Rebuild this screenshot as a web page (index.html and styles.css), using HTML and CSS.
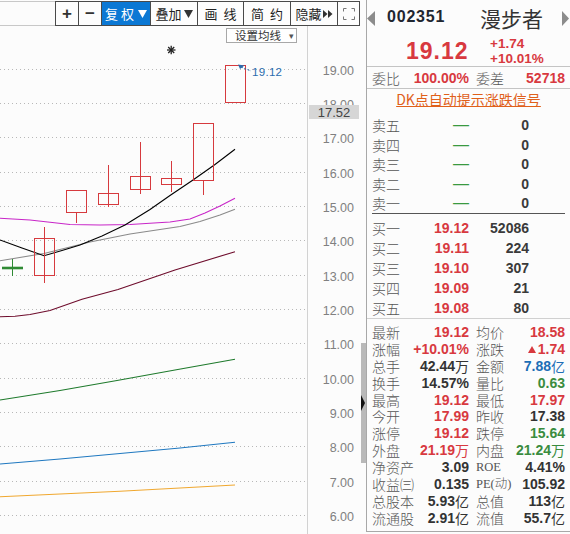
FILE: index.html
```html
<!DOCTYPE html>
<html lang="zh">
<head>
<meta charset="utf-8">
<title>002351 漫步者</title>
<link rel="stylesheet" href="styles.css">
</head>
<body>
<div class="app">
  <section class="chart-col">
    <div class="toolbar">
      <div class="tb-group">
        <span class="tb-btn b-plus">+</span>
        <span class="tb-btn b-minus">−</span>
        <span class="tb-btn b-fq active"><span class="sp3">复权</span><svg class="tri" width="9" height="8" viewBox="0 0 9 8"><polygon points="0,0 9,0 4.5,8"/></svg></span>
        <span class="tb-btn b-dj">叠加<svg class="tri" width="9" height="8" viewBox="0 0 9 8"><polygon points="0,0 9,0 4.5,8"/></svg></span>
        <span class="tb-btn b-hx"><span class="sp6">画线</span></span>
        <span class="tb-btn b-jy"><span class="sp6">简约</span></span>
        <span class="tb-btn b-yc">隐藏<svg class="dbl" width="10" height="8" viewBox="0 0 10 8"><polygon points="0,0 4.5,4 0,8"/><polygon points="5,0 9.5,4 5,8"/></svg></span>
        <span class="tb-btn b-fs"><svg class="fs" width="12" height="12" viewBox="0 0 12 12"><path d="M0.5 3.5V0.5H3.5M8.5 0.5H11.5V3.5M11.5 8.5V11.5H8.5M3.5 11.5H0.5V8.5"/></svg></span>
      </div>
    </div>
    <div class="chart">
      <svg class="kline" width="360" height="508" viewBox="0 26 360 508">
        <g class="grid">
          <line x1="0" y1="69.5" x2="305" y2="69.5"/>
          <line x1="0" y1="103.5" x2="305" y2="103.5"/>
          <line x1="0" y1="137.5" x2="305" y2="137.5"/>
          <line x1="0" y1="172.5" x2="305" y2="172.5"/>
          <line x1="0" y1="206.5" x2="305" y2="206.5"/>
          <line x1="0" y1="240.5" x2="305" y2="240.5"/>
          <line x1="0" y1="275.5" x2="305" y2="275.5"/>
          <line x1="0" y1="309.5" x2="305" y2="309.5"/>
          <line x1="0" y1="343.5" x2="305" y2="343.5"/>
          <line x1="0" y1="378.5" x2="305" y2="378.5"/>
          <line x1="0" y1="412.5" x2="305" y2="412.5"/>
          <line x1="0" y1="446.5" x2="305" y2="446.5"/>
          <line x1="0" y1="481.5" x2="305" y2="481.5"/>
          <line x1="0" y1="515.5" x2="305" y2="515.5"/>
        </g>
        <line class="axis" x1="307.5" y1="26" x2="307.5" y2="534"/>
        <g class="ylabels">
          <text x="354" y="75">19.00</text>
          <text x="354" y="109">18.00</text>
          <text x="354" y="143">17.00</text>
          <text x="354" y="178">16.00</text>
          <text x="354" y="212">15.00</text>
          <text x="354" y="246">14.00</text>
          <text x="354" y="281">13.00</text>
          <text x="354" y="315">12.00</text>
          <text x="354" y="349">11.00</text>
          <text x="354" y="384">10.00</text>
          <text x="354" y="418">9.00</text>
          <text x="354" y="452">8.00</text>
          <text x="354" y="487">7.00</text>
          <text x="354" y="521">6.00</text>
        </g>
        <rect class="cur-box" x="309" y="105" width="50" height="14"/>
        <text class="cur-txt" x="334" y="116.5">17.52</text>

        <polyline class="ma ma-orange" points="0,496.7 60,494 120,491.3 180,488 235,485"/>
        <polyline class="ma ma-blue" points="0,464 60,459 120,453.5 180,448 235,442.3"/>
        <polyline class="ma ma-green" points="0,400 60,390.5 117,380.5 175,370 235,359.3"/>
        <polyline class="ma ma-maroon" points="0,316.7 15,316.3 30,314.5 50,310.5 82,299.3 118,289.5 175,270 235,251.7"/>
        <polyline class="ma ma-gray" points="0,260.7 44,253.5 90,242 130,234 180,226.5 200,221.5 220,215 235,209.3"/>
        <polyline class="ma ma-magenta" points="0,218.3 30,220 70,224.5 100,225 130,224.5 170,222 190,219 205,213 220,206 235,198.3"/>
        <polyline class="ma ma-black" points="0,240 22,248 44,255.7 62,250.5 80,245 102,236 125,225 150,209.5 170,195.5 193,180 215,164.5 235,149.3"/>

        <g class="doji">
          <line x1="12.5" y1="259" x2="12.5" y2="276"/>
          <line class="doji-bar" x1="2" y1="268" x2="23" y2="268"/>
        </g>
        <g class="up">
          <line x1="44.5" y1="227" x2="44.5" y2="283"/>
          <rect x="34.5" y="238.5" width="20" height="37"/>
          <line x1="76.5" y1="212.5" x2="76.5" y2="223"/>
          <rect x="66.5" y="190.5" width="20" height="22"/>
          <line x1="108.5" y1="165" x2="108.5" y2="207"/>
          <rect x="98.5" y="193.5" width="20" height="11"/>
          <line x1="140.5" y1="142" x2="140.5" y2="194"/>
          <rect x="130.5" y="176.5" width="20" height="13"/>
          <line x1="171.5" y1="161" x2="171.5" y2="192"/>
          <rect x="161.5" y="178.5" width="20" height="6"/>
          <line x1="203.5" y1="180.5" x2="203.5" y2="195"/>
          <rect x="193.5" y="123.5" width="20" height="57"/>
          <rect x="225.5" y="65.5" width="20" height="37"/>
        </g>

        <g class="star">
          <line x1="167" y1="50" x2="175.5" y2="50"/>
          <line x1="171.2" y1="45.8" x2="171.2" y2="54.2"/>
          <line x1="168.2" y1="47" x2="174.2" y2="53"/>
          <line x1="174.2" y1="47" x2="168.2" y2="53"/>
        </g>
        <polygon class="hi-arrow" points="238,64.5 244.5,65.5 240,69"/>
        <line class="hi-dash" x1="241" y1="67" x2="251" y2="71"/>
        <text class="hi-txt" x="252" y="75.5">19.12</text>
      </svg>
      <div class="ma-btn">设置均线<span class="caret">▾</span></div>
    </div>
  </section>

  <div class="scroll-col">
    <div class="thumb"></div>
    <svg class="grip" width="5" height="16" viewBox="0 0 5 16"><polygon points="0,0 4,8 0,16"/></svg>
  </div>

  <aside class="quote">
    <div class="q-head">
      <svg class="nav" width="8" height="15" viewBox="0 0 8 15"><polygon points="8,0 8,15 0,7.5"/></svg>
      <span class="code">002351</span>
      <span class="name">漫步者</span>
      <svg class="nav nav-r" width="7" height="15" viewBox="0 0 7 15"><polygon points="0,0 7,7.5 0,15"/></svg>
    </div>
    <div class="q-price">
      <span class="big">19.12</span>
      <div class="chg">
        <div>+1.74</div>
        <div>+10.01%</div>
      </div>
    </div>
    <div class="q-wb pair-row">
      <div class="cell"><span class="lb">委比</span><span class="val red">100.00%</span></div>
      <div class="cell"><span class="lb">委差</span><span class="val red">52718</span></div>
    </div>
    <div class="q-dk"><span class="dk-link">DK点自动提示涨跌信号</span></div>

    <div class="ob ob-sell">
      <div class="ob-row"><span class="lb">卖五</span><span class="ob-p dash">—</span><span class="ob-v">0</span></div>
      <div class="ob-row"><span class="lb">卖四</span><span class="ob-p dash">—</span><span class="ob-v">0</span></div>
      <div class="ob-row"><span class="lb">卖三</span><span class="ob-p dash">—</span><span class="ob-v">0</span></div>
      <div class="ob-row"><span class="lb">卖二</span><span class="ob-p dash">—</span><span class="ob-v">0</span></div>
      <div class="ob-row"><span class="lb">卖一</span><span class="ob-p dash">—</span><span class="ob-v">0</span></div>
    </div>
    <div class="ob-line"></div>
    <div class="ob ob-buy">
      <div class="ob-row"><span class="lb">买一</span><span class="ob-p red">19.12</span><span class="ob-v">52086</span></div>
      <div class="ob-row"><span class="lb">买二</span><span class="ob-p red">19.11</span><span class="ob-v">224</span></div>
      <div class="ob-row"><span class="lb">买三</span><span class="ob-p red">19.10</span><span class="ob-v">307</span></div>
      <div class="ob-row"><span class="lb">买四</span><span class="ob-p red">19.09</span><span class="ob-v">21</span></div>
      <div class="ob-row"><span class="lb">买五</span><span class="ob-p red">19.08</span><span class="ob-v">80</span></div>
    </div>

    <div class="stats">
      <div class="pair-row st-row">
        <div class="cell"><span class="lb">最新</span><span class="val red">19.12</span></div>
        <div class="cell"><span class="lb">均价</span><span class="val red">18.58</span></div>
      </div>
      <div class="pair-row st-row">
        <div class="cell"><span class="lb">涨幅</span><span class="val red">+10.01%</span></div>
        <div class="cell"><span class="lb">涨跌</span><span class="val red"><svg class="up-tri" width="8" height="7" viewBox="0 0 8 7"><polygon points="4,0 8,7 0,7"/></svg>1.74</span></div>
      </div>
      <div class="pair-row st-row">
        <div class="cell"><span class="lb">总手</span><span class="val dark">42.44<span class="u">万</span></span></div>
        <div class="cell"><span class="lb">金额</span><span class="val blue">7.88<span class="u">亿</span></span></div>
      </div>
      <div class="pair-row st-row">
        <div class="cell"><span class="lb">换手</span><span class="val dark">14.57%</span></div>
        <div class="cell"><span class="lb">量比</span><span class="val green">0.63</span></div>
      </div>
      <div class="pair-row st-row">
        <div class="cell"><span class="lb">最高</span><span class="val red">19.12</span></div>
        <div class="cell"><span class="lb">最低</span><span class="val red">17.97</span></div>
      </div>
      <div class="pair-row st-row">
        <div class="cell"><span class="lb">今开</span><span class="val red">17.99</span></div>
        <div class="cell"><span class="lb">昨收</span><span class="val dark">17.38</span></div>
      </div>
      <div class="pair-row st-row">
        <div class="cell"><span class="lb">涨停</span><span class="val red">19.12</span></div>
        <div class="cell"><span class="lb">跌停</span><span class="val green">15.64</span></div>
      </div>
      <div class="pair-row st-row">
        <div class="cell"><span class="lb">外盘</span><span class="val red">21.19<span class="u">万</span></span></div>
        <div class="cell"><span class="lb">内盘</span><span class="val green">21.24<span class="u">万</span></span></div>
      </div>
      <div class="pair-row st-row">
        <div class="cell"><span class="lb">净资产</span><span class="val dark">3.09</span></div>
        <div class="cell"><span class="lb lat">ROE</span><span class="val dark">4.41%</span></div>
      </div>
      <div class="pair-row st-row">
        <div class="cell"><span class="lb">收益㈢</span><span class="val dark">0.135</span></div>
        <div class="cell"><span class="lb lat">PE(动)</span><span class="val dark">105.92</span></div>
      </div>
      <div class="pair-row st-row">
        <div class="cell"><span class="lb">总股本</span><span class="val dark">5.93<span class="u">亿</span></span></div>
        <div class="cell"><span class="lb">总值</span><span class="val dark">113<span class="u">亿</span></span></div>
      </div>
      <div class="pair-row st-row">
        <div class="cell"><span class="lb">流通股</span><span class="val dark">2.91<span class="u">亿</span></span></div>
        <div class="cell"><span class="lb">流值</span><span class="val dark">55.7<span class="u">亿</span></span></div>
      </div>
    </div>
  </aside>
</div>
</body>
</html>
```

FILE: styles.css
```css
html, body {
  margin: 0;
  padding: 0;
  background: #fcfcfc;
}
body {
  font-family: "Noto Sans CJK SC", "Liberation Sans", sans-serif;
  color: #333;
  overflow: hidden;
}
.app {
  display: flex;
  width: 570px;
  height: 534px;
}

/* ---------- chart column ---------- */
.chart-col {
  width: 360px;
  flex: none;
  display: flex;
  flex-direction: column;
}
.toolbar {
  height: 23px;
  margin-top: 1px;
  border-top: 1px solid #c8c8c8;
  border-bottom: 1px solid #c8c8c8;
  display: flex;
}
.tb-group {
  display: flex;
  margin: -1px 0 -1px 55px;
  height: 25px;
  box-sizing: border-box;
  border: 1px solid #4a4a4a;
  background: #fdfdfd;
}
.tb-btn {
  display: flex;
  align-items: center;
  justify-content: center;
  box-sizing: border-box;
  border-left: 1px solid #4a4a4a;
  font-size: 13px;
  color: #222;
  white-space: nowrap;
}
.b-plus { width: 22px; border-left: none; }
.b-minus { width: 23px; }
.b-plus, .b-minus {
  font-family: "Liberation Sans", sans-serif;
  font-weight: bold;
  font-size: 17px;
  color: #333;
}
.b-fq { width: 49px; }
.b-dj { width: 47px; }
.b-hx { width: 46px; }
.b-jy { width: 47px; }
.b-yc { width: 47px; }
.b-fs { width: 22px; }
.tb-btn.active {
  background: #0b78d4;
  color: #fff;
}
.sp3 { letter-spacing: 3px; }
.sp6 { letter-spacing: 6px; margin-right: -6px; }
.tri { margin-left: 2px; fill: #333; }
.active .tri { fill: #fff; margin-left: 1px; }
.dbl { margin-left: 1px; fill: #333; }
.fs { fill: none; stroke: #777; stroke-width: 1; }

.chart {
  position: relative;
  flex: 1;
}
.kline { display: block; }
.grid line {
  stroke: #b8b8b8;
  stroke-width: 1;
  stroke-dasharray: 1 3;
}
.axis { stroke: #d2d2d2; stroke-width: 1; }
.ylabels text {
  font-family: "Liberation Sans", sans-serif;
  font-size: 12.5px;
  fill: #808080;
  text-anchor: end;
}
.cur-box { fill: #d6d6d6; }
.cur-txt {
  font-family: "Liberation Sans", sans-serif;
  font-size: 13px;
  fill: #444;
  text-anchor: middle;
}
.ma { fill: none; stroke-width: 1.1; }
.ma-orange { stroke: #f0a830; }
.ma-blue { stroke: #1f78c0; }
.ma-green { stroke: #1e7a2c; }
.ma-maroon { stroke: #6e0c2c; }
.ma-gray { stroke: #8a8a8a; }
.ma-magenta { stroke: #c826c8; }
.ma-black { stroke: #000; }
.doji line { stroke: #2f8a34; stroke-width: 1; }
.doji .doji-bar { stroke-width: 2.6; }
.up line, .up rect {
  stroke: #d63a3e;
  stroke-width: 1;
  fill: none;
}
.star line { stroke: #222; stroke-width: 1.3; }
.hi-arrow { fill: #2a6cae; }
.hi-dash { stroke: #2a6cae; stroke-width: 1; stroke-dasharray: 2 1.5; }
.hi-txt {
  font-family: "Liberation Sans", sans-serif;
  font-size: 11.5px;
  fill: #2a6cae;
  letter-spacing: 0.3px;
}
.ma-btn {
  position: absolute;
  left: 226px;
  top: 2px;
  width: 71px;
  height: 15px;
  box-sizing: border-box;
  border: 1px solid #a8a8a8;
  background: #fff;
  font-size: 11.5px;
  line-height: 13px;
  color: #333;
  padding-left: 8px;
  display: flex;
  align-items: center;
  white-space: nowrap;
}
.caret {
  font-size: 9px;
  color: #555;
  margin-left: 8px;
}

/* ---------- scroll strip ---------- */
.scroll-col {
  position: relative;
  width: 6px;
  flex: none;
}
.thumb {
  margin: 343px 0 0 1px;
  width: 5px;
  height: 120px;
  background: #b9b9b9;
}
.grip {
  position: absolute;
  left: 1px;
  top: 395px;
  fill: #111;
}

/* ---------- quote panel ---------- */
.quote {
  width: 204px;
  flex: none;
  height: 532px;
  box-sizing: border-box;
  border-left: 1px solid #a8a8a8;
  border-bottom: 1px solid #a8a8a8;
  font-size: 14px;
}
.q-head {
  height: 36px;
  display: flex;
  align-items: center;
}
.nav { fill: #8c8c8c; flex: none; }
.nav-r { margin-right: 1px; }
.code {
  margin-left: 12px;
  margin-bottom: 2px;
  font-family: "Liberation Sans", sans-serif;
  font-weight: bold;
  font-size: 16px;
  letter-spacing: 0.8px;
  color: #1f2630;
}
.name {
  margin-left: auto;
  margin-right: 19px;
  font-size: 21px;
  color: #333;
  line-height: 26px;
}
.q-price {
  height: 30px;
  border-bottom: 1px solid #c4c4c4;
  display: flex;
  align-items: center;
  padding-left: 39px;
}
.big {
  width: 84px;
  font-family: "Liberation Sans", sans-serif;
  font-weight: bold;
  font-size: 23px;
  letter-spacing: 1px;
  color: #d8393f;
}
.chg {
  font-family: "Liberation Sans", sans-serif;
  font-weight: bold;
  font-size: 13.5px;
  line-height: 15px;
  color: #d8393f;
}
.pair-row {
  display: grid;
  grid-template-columns: 97px 89px;
  column-gap: 7px;
  padding: 0 5px;
  align-items: center;
}
.cell {
  display: flex;
  justify-content: space-between;
  align-items: center;
  white-space: nowrap;
}
.q-wb {
  height: 21px;
  border-bottom: 1px solid #c4c4c4;
}
.lb {
  font-size: 14px;
  color: #555;
  font-weight: 300;
}
.lb.lat {
  font-family: "Liberation Serif", "Noto Sans CJK SC", serif;
  font-size: 12.5px;
  color: #555;
}
.val {
  font-family: "Liberation Sans", sans-serif;
  font-weight: bold;
  font-size: 14px;
  display: flex;
  align-items: center;
}
.u {
  font-family: "Noto Sans CJK SC", sans-serif;
  font-weight: normal;
  font-size: 14px;
}
.red { color: #d8393f; }
.dark { color: #333; }
.blue { color: #1d6eb6; }
.green { color: #3a8c3e; }
.up-tri { fill: #d8393f; margin-right: 2px; }

.q-dk {
  height: 26px;
  line-height: 20px;
  text-align: center;
}
.dk-link {
  color: #e0601a;
  text-decoration: underline;
  font-size: 14px;
}

.ob-row {
  display: grid;
  grid-template-columns: 40px 57px 60px;
  padding-left: 5px;
  align-items: center;
}
.ob-sell .ob-row { height: 19.6px; }
.ob-buy { padding-top: 4px; }
.ob-buy .ob-row { height: 20px; }
.ob-row .lb { justify-self: start; white-space: nowrap; }
.ob-p, .ob-v {
  justify-self: end;
  font-family: "Liberation Sans", sans-serif;
  font-weight: bold;
  font-size: 14px;
}
.ob-v { color: #3a3a3a; }
.dash {
  font-weight: normal;
  font-size: 16px;
  color: #3a9a40;
}
.ob-line {
  height: 1px;
  margin: 0 5px;
  background: #555;
}
.stats {
  border-top: 1px solid #d0d0d0;
  padding-top: 5px;
}
.st-row {
  height: 16.9px;
  line-height: 16.9px;
}
```
